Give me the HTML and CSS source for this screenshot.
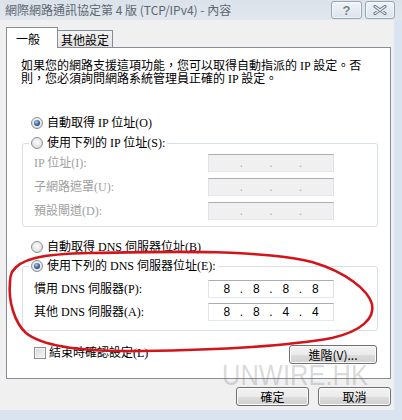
FILE: index.html
```html
<!DOCTYPE html>
<html lang="zh-Hant">
<head>
    <meta charset="UTF-8">
    <meta name="viewport" content="width=device-width, initial-scale=1.0">
    <title>網際網路通訊協定第 4 版 (TCP/IPv4) - 內容</title>
    <link rel="stylesheet" href="styles.css">
</head>
<body>
    <div class="window">
        <div class="titlebar">
            <span class="title">網際網路通訊協定第 4 版 (TCP/IPv4) - 內容</span>
            <div class="caption-buttons">
                <span class="cap-btn help">?</span>
                <span class="cap-btn close">
                    <svg width="14" height="10" viewBox="0 0 14 10">
                        <path d="M2 1.5 L12 8.5 M12 1.5 L2 8.5" stroke="#6d7986" stroke-width="3.2" stroke-linecap="round"/>
                        <path d="M2 1.5 L12 8.5 M12 1.5 L2 8.5" stroke="#eef2f6" stroke-width="1.2" stroke-linecap="round"/>
                    </svg>
                </span>
            </div>
        </div>

        <div class="frame-row">
            <div class="client">
                <div class="tabs">
                    <div class="tab active">一般</div>
                    <div class="tab">其他設定</div>
                </div>

                <div class="panel">
                    <p class="desc">如果您的網路支援這項功能，您可以取得自動指派的 IP 設定。否<br>則，您必須詢問網路系統管理員正確的 IP 設定。</p>

                    <div class="option first"><span class="radio checked"></span>自動取得 IP 位址(O)</div>
                    <fieldset class="group ip-group">
                        <legend><span class="option"><span class="radio"></span>使用下列的 IP 位址(S):</span></legend>
                        <div class="field-row disabled">
                            <span class="field-label">IP 位址(I):</span>
                            <span class="ip-box"><span class="seg"></span><span class="dot">.</span><span class="seg"></span><span class="dot">.</span><span class="seg"></span><span class="dot">.</span><span class="seg"></span></span>
                        </div>
                        <div class="field-row disabled">
                            <span class="field-label">子網路遮罩(U):</span>
                            <span class="ip-box"><span class="seg"></span><span class="dot">.</span><span class="seg"></span><span class="dot">.</span><span class="seg"></span><span class="dot">.</span><span class="seg"></span></span>
                        </div>
                        <div class="field-row disabled">
                            <span class="field-label">預設閘道(D):</span>
                            <span class="ip-box"><span class="seg"></span><span class="dot">.</span><span class="seg"></span><span class="dot">.</span><span class="seg"></span><span class="dot">.</span><span class="seg"></span></span>
                        </div>
                    </fieldset>

                    <div class="option dns-auto"><span class="radio"></span>自動取得 DNS 伺服器位址(B)</div>
                    <fieldset class="group dns-group">
                        <legend><span class="option"><span class="radio checked"></span>使用下列的 DNS 伺服器位址(E):</span></legend>
                        <div class="field-row">
                            <span class="field-label">慣用 DNS 伺服器(P):</span>
                            <span class="ip-box"><span class="seg">8</span><span class="dot">.</span><span class="seg">8</span><span class="dot">.</span><span class="seg">8</span><span class="dot">.</span><span class="seg">8</span></span>
                        </div>
                        <div class="field-row">
                            <span class="field-label">其他 DNS 伺服器(A):</span>
                            <span class="ip-box"><span class="seg">8</span><span class="dot">.</span><span class="seg">8</span><span class="dot">.</span><span class="seg">4</span><span class="dot">.</span><span class="seg">4</span></span>
                        </div>
                    </fieldset>

                    <div class="check-row">
                        <span class="check-label"><span class="checkbox"></span>結束時確認設定(L)</span>
                        <button class="btn advanced">進階(V)...</button>
                    </div>
                </div>

                <div class="dialog-buttons">
                    <button class="btn">確定</button>
                    <button class="btn">取消</button>
                </div>
            </div>
            <div class="side-frame"></div>
        </div>

        <div class="watermark">UNWIRE.HK</div>

        <svg class="red-mark" width="402" height="420" viewBox="0 0 402 420">
            <path d="M12 272 C20 259, 40 254, 90 253 C180 251, 262 250, 312 262 C346 272, 368 290, 372 304 C375 318, 362 331, 332 338 C292 345, 222 350, 142 351 C82 352, 42 346, 26 333 C15 323, 8 302, 10 282 C10 277, 11 274, 12 272" fill="none" stroke="#d3151b" stroke-width="2.6" stroke-linecap="round"/>
        </svg>
    </div>
</body>
</html>
```

FILE: styles.css
```css
* {
    box-sizing: border-box;
}

body {
    margin: 0;
    background-color: #d9e4f0;
    font-family: "Liberation Serif", "Noto Sans CJK TC", serif;
    font-size: 12px;
    color: #000;
}

.window {
    position: relative;
    width: 402px;
    height: 420px;
    overflow: hidden;
}

/* title bar */
.titlebar {
    display: flex;
    align-items: center;
    justify-content: space-between;
    height: 20px;
    background: linear-gradient(#dbe2ea, #e1e7ee);
    padding-left: 5px;
}

.title {
    font-family: "Noto Sans CJK TC", sans-serif;
    font-size: 12px;
    line-height: 20px;
    color: #5d6771;
}

.caption-buttons {
    display: flex;
    gap: 3px;
    margin-right: 7px;
    align-self: flex-start;
    margin-top: 1px;
}

.cap-btn {
    display: flex;
    align-items: center;
    justify-content: center;
    height: 18px;
    border: 1px solid #97a5b5;
    border-radius: 3px;
    background: linear-gradient(#f1f4f8, #dce3eb);
    box-shadow: inset 0 0 0 1px rgba(255, 255, 255, 0.6);
}

.help {
    width: 31px;
    font-family: "Liberation Sans", sans-serif;
    font-weight: bold;
    font-size: 13px;
    color: #76828e;
    text-shadow: 0 0 1px #fff;
}

.close {
    width: 30px;
}

/* window body */
.frame-row {
    display: flex;
}

.client {
    width: 393px;
    height: 390px;
    background-color: #f0f0f0;
}

.side-frame {
    flex: 1;
    background: linear-gradient(90deg, #eef3f8 0, #d7e3f0 2px, #d9e4f0);
}

/* tabs */
.tabs {
    display: flex;
    align-items: flex-end;
    padding-left: 6px;
    margin-top: 7px;
    font-family: "Noto Sans CJK TC", sans-serif;
    font-size: 12px;
}

.tab {
    height: 17px;
    line-height: 15px;
    padding: 0 4px;
    border: 1px solid #898c95;
    border-bottom: none;
    background: linear-gradient(#f3f3f3, #e3e3e3);
    margin-left: -1px;
}

.tab.active {
    position: relative;
    z-index: 1;
    width: 52px;
    height: 21px;
    line-height: 21px;
    margin-left: 0;
    margin-bottom: -1px;
    padding-left: 9px;
    background: #fff;
}

.tab.active + .tab {
    width: 56px;
    text-align: center;
    padding: 0;
    line-height: 17px;
}

.panel {
    width: 385px;
    height: 332px;
    margin-left: 6px;
    border: 1px solid #898c95;
    background-color: #fff;
}

.desc {
    margin: 12px 0 0 14px;
    line-height: 13px;
}

/* radio options */
.option {
    display: flex;
    align-items: center;
    height: 16px;
    line-height: 16px;
    white-space: nowrap;
}

.panel > .option {
    padding-left: 24px;
}

.option.first {
    margin-top: 29px;
}

.option.dns-auto {
    margin-top: 12px;
}

.radio {
    width: 12px;
    height: 12px;
    margin-right: 4px;
    border-radius: 50%;
    border: 1px solid #8d8f92;
    background: radial-gradient(circle at 50% 40%, #fdfdfd, #dcdcdc 80%);
    display: flex;
    align-items: center;
    justify-content: center;
}

.radio.checked::after {
    content: "";
    width: 6px;
    height: 6px;
    border-radius: 50%;
    background: radial-gradient(circle at 40% 35%, #b4cdeb, #2f5f9a 55%, #1b3558);
}

/* group boxes */
.group {
    margin: 4px 0 0 15px;
    width: 356px;
    padding: 0 0 6px 11px;
    border: 1px solid #d5dfe5;
    border-radius: 3px;
}

.group legend {
    margin-left: -5px;
    padding: 0 2px;
}

.dns-group {
    margin-top: 3px;
    padding-bottom: 9px;
}

.field-row {
    display: flex;
    align-items: center;
    height: 18px;
    margin-top: 6px;
}

.ip-group .field-row:first-of-type {
    margin-top: 3px;
}

.dns-group .field-row + .field-row {
    margin-top: 5px;
}

.field-label {
    width: 174px;
    line-height: 16px;
    white-space: nowrap;
}

.disabled .field-label {
    color: #a0a0a0;
}

.ip-box {
    display: flex;
    justify-content: center;
    align-items: center;
    width: 126px;
    height: 18px;
    border: 1px solid;
    border-color: #abadb3 #dbdfe6 #e3e9ef #e2e3ea;
    background: #fff;
    font-family: "Liberation Sans", sans-serif;
    font-size: 12px;
    line-height: 16px;
}

.disabled .ip-box {
    background: #f0f0f0;
    color: #a8a8a8;
}

.seg {
    width: 22px;
    text-align: center;
}

.dot {
    width: 7.5px;
    text-align: center;
}

/* bottom of panel */
.check-row {
    display: flex;
    align-items: center;
    justify-content: space-between;
    margin-top: 14px;
    padding: 0 13px 0 27px;
}

.check-label {
    display: flex;
    align-items: center;
    line-height: 16px;
    margin-top: -3px;
}

.checkbox {
    width: 12px;
    height: 12px;
    margin-right: 3px;
    border: 1px solid #8d8f92;
    background: linear-gradient(135deg, #d8d8d8, #f6f6f6);
    box-shadow: inset 0 0 0 1px #f4f4f4;
}

.btn {
    height: 19px;
    padding: 0;
    border: 1px solid #707070;
    border-radius: 3px;
    background: linear-gradient(#f2f2f2 0%, #ebebeb 50%, #dddddd 51%, #cfcfcf 100%);
    box-shadow: inset 0 0 0 1px #fbfbfb;
    font-family: "Noto Sans CJK TC", sans-serif;
    font-size: 12px;
    line-height: 16px;
    color: #000;
}

.btn.advanced {
    width: 88px;
}

.dialog-buttons {
    display: flex;
    justify-content: flex-end;
    gap: 9px;
    margin-top: 8px;
    padding-right: 2px;
}

.dialog-buttons .btn {
    width: 73px;
}

/* overlays */
.watermark {
    position: absolute;
    left: 222px;
    top: 364px;
    font-family: "Liberation Sans", sans-serif;
    font-size: 30px;
    line-height: 22px;
    color: rgba(110, 110, 110, 0.26);
    transform: scaleX(0.85);
    transform-origin: left top;
    pointer-events: none;
}

.red-mark {
    position: absolute;
    left: 0;
    top: 0;
    pointer-events: none;
}
```
